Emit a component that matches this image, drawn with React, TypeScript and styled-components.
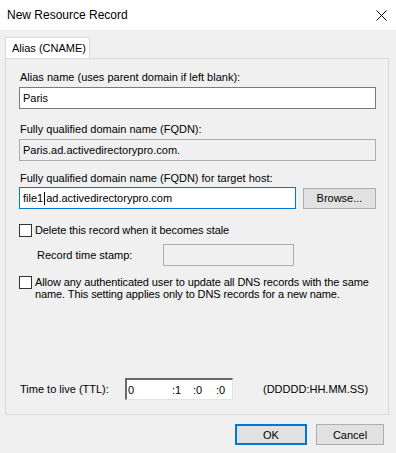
import React from 'react';
import styled, { createGlobalStyle, css } from 'styled-components';

const GlobalStyle = createGlobalStyle`
  html, body {
    margin: 0;
    padding: 0;
    background: #f0f0f0;
  }
  body {
    font-family: 'Liberation Sans', Arial, sans-serif;
    font-size: 11px;
    color: #000;
  }
`;

const App = () => {
  return (
    <>
      <GlobalStyle />
      <Window>
        <TitleBar>
          <Title>New Resource Record</Title>
          <CloseButton aria-label="close">
            <svg width="11" height="11" viewBox="0 0 11 11">
              <path d="M0.5 0.5 L10.5 10.5 M10.5 0.5 L0.5 10.5" stroke="#000" strokeWidth="1" />
            </svg>
          </CloseButton>
        </TitleBar>

        <Body>
          <TabStrip>
            <Tab>Alias (CNAME)</Tab>
          </TabStrip>

          <TabPanel>
            <Label $top={12}>Alias name (uses parent domain if left blank):</Label>
            <TextBox $top={3}>Paris</TextBox>

            <Label $top={14}>Fully qualified domain name (FQDN):</Label>
            <TextBox $top={3} $readOnly>Paris.ad.activedirectorypro.com.</TextBox>

            <Label $top={11}>Fully qualified domain name (FQDN) for target host:</Label>
            <FieldRow>
              <TextBox $focused $grow>
                file1<Caret />ad.activedirectorypro.com
              </TextBox>
              <PushButton $width={73}>Browse...</PushButton>
            </FieldRow>

            <CheckRow $top={15}>
              <CheckBox />
              <CheckText>Delete this record when it becomes stale</CheckText>
            </CheckRow>

            <StampRow>
              <StampLabel>Record time stamp:</StampLabel>
              <TextBox $readOnly $width={131} />
            </StampRow>

            <CheckRow $top={10}>
              <CheckBox />
              <CheckText>
                Allow any authenticated user to update all DNS records with the same
                <br />
                name. This setting applies only to DNS records for a new name.
              </CheckText>
            </CheckRow>

            <TtlRow>
              <TtlLabel>Time to live (TTL):</TtlLabel>
              <TtlField>
                <TtlPart $width={44}>0</TtlPart>
                <TtlPart $width={21}>:1</TtlPart>
                <TtlPart $width={23}>:0</TtlPart>
                <TtlPart>:0</TtlPart>
              </TtlField>
              <TtlFormat>(DDDDD:HH.MM.SS)</TtlFormat>
            </TtlRow>
          </TabPanel>

          <ButtonRow>
            <PushButton $width={72} $default>
              OK
            </PushButton>
            <PushButton $width={68}>Cancel</PushButton>
          </ButtonRow>
        </Body>
      </Window>
    </>
  );
};

export default App;

const Window = styled.div`
  width: 396px;
  height: 453px;
  display: flex;
  flex-direction: column;
  background: #f0f0f0;
  overflow: hidden;
`;

const TitleBar = styled.div`
  height: 30px;
  background: #fff;
  display: flex;
  align-items: center;
  justify-content: space-between;
  padding: 0 9px 0 7px;
  box-sizing: border-box;
`;

const Title = styled.span`
  font-size: 12px;
  color: #000;
`;

const CloseButton = styled.div`
  width: 11px;
  height: 11px;
  display: flex;
  margin-top: 1px;
`;

const Body = styled.div`
  flex: 1;
  display: flex;
  flex-direction: column;
  padding: 7px 7px 0 5px;
`;

const TabStrip = styled.div`
  display: flex;
  height: 21px;
  position: relative;
  z-index: 1;
`;

const Tab = styled.div`
  width: 85px;
  box-sizing: border-box;
  border: 1px solid #d9d9d9;
  border-bottom: none;
  background: #fff;
  padding: 4px 0 0 6px;
  line-height: 13px;
`;

const TabPanel = styled.div`
  height: 357px;
  box-sizing: border-box;
  border: 1px solid #d9d9d9;
  background: #f0f0f0;
  display: flex;
  flex-direction: column;
  padding: 0 12px 14px 13px;
`;

const Label = styled.div<{ $top: number }>`
  margin-top: ${(p) => p.$top}px;
  margin-left: 1px;
  line-height: 13px;
  white-space: nowrap;
`;

const TextBox = styled.div<{
  $top?: number;
  $readOnly?: boolean;
  $focused?: boolean;
  $grow?: boolean;
  $width?: number;
}>`
  height: 22px;
  box-sizing: border-box;
  margin-top: ${(p) => p.$top ?? 0}px;
  border: 1px solid #7a7a7a;
  background: #fff;
  padding: 0 3px;
  display: flex;
  align-items: center;
  white-space: nowrap;
  ${(p) =>
    p.$readOnly &&
    css`
      background: #f0f0f0;
      border-color: #adadad;
    `}
  ${(p) =>
    p.$focused &&
    css`
      border-color: #0078d7;
    `}
  ${(p) => p.$grow && 'flex: 1;'}
  ${(p) => p.$width && `width: ${p.$width}px;`}
`;

const Caret = styled.span`
  display: inline-block;
  width: 1px;
  height: 13px;
  background: #000;
  margin: 0 1px;
`;

const FieldRow = styled.div`
  display: flex;
  align-items: center;
  gap: 7px;
  margin-top: 2px;
`;

const PushButton = styled.div<{ $width: number; $default?: boolean }>`
  width: ${(p) => p.$width}px;
  height: 21px;
  box-sizing: border-box;
  border: 1px solid #adadad;
  background: #e1e1e1;
  display: flex;
  align-items: center;
  justify-content: center;
  ${(p) =>
    p.$default &&
    css`
      border: 2px solid #0078d7;
    `}
`;

const CheckRow = styled.div<{ $top: number }>`
  display: flex;
  align-items: flex-start;
  margin-top: ${(p) => p.$top}px;
`;

const CheckBox = styled.div`
  width: 13px;
  height: 13px;
  box-sizing: border-box;
  border: 1px solid #333;
  background: #fff;
  flex-shrink: 0;
`;

const CheckText = styled.div`
  margin-left: 3px;
  line-height: 12px;
  white-space: nowrap;
  letter-spacing: -0.1px;
`;

const StampRow = styled.div`
  display: flex;
  align-items: center;
  margin-top: 7px;
`;

const StampLabel = styled.div`
  width: 126px;
  margin-left: 18px;
`;

const TtlRow = styled.div`
  margin-top: auto;
  display: flex;
  align-items: center;
`;

const TtlLabel = styled.div`
  width: 105px;
  margin-left: 1px;
`;

const TtlField = styled.div`
  width: 108px;
  height: 22px;
  box-sizing: border-box;
  background: #fff;
  border-top: 2px solid #696969;
  border-left: 2px solid #696969;
  border-right: 1px solid #e3e3e3;
  border-bottom: 1px solid #e3e3e3;
  display: flex;
  align-items: center;
  padding-left: 1px;
`;

const TtlPart = styled.span<{ $width?: number }>`
  ${(p) => p.$width && `width: ${p.$width}px;`}
`;

const TtlFormat = styled.div`
  margin-left: 30px;
`;

const ButtonRow = styled.div`
  display: flex;
  justify-content: flex-end;
  gap: 9px;
  margin-top: 9px;
  padding-right: 5px;
`;
